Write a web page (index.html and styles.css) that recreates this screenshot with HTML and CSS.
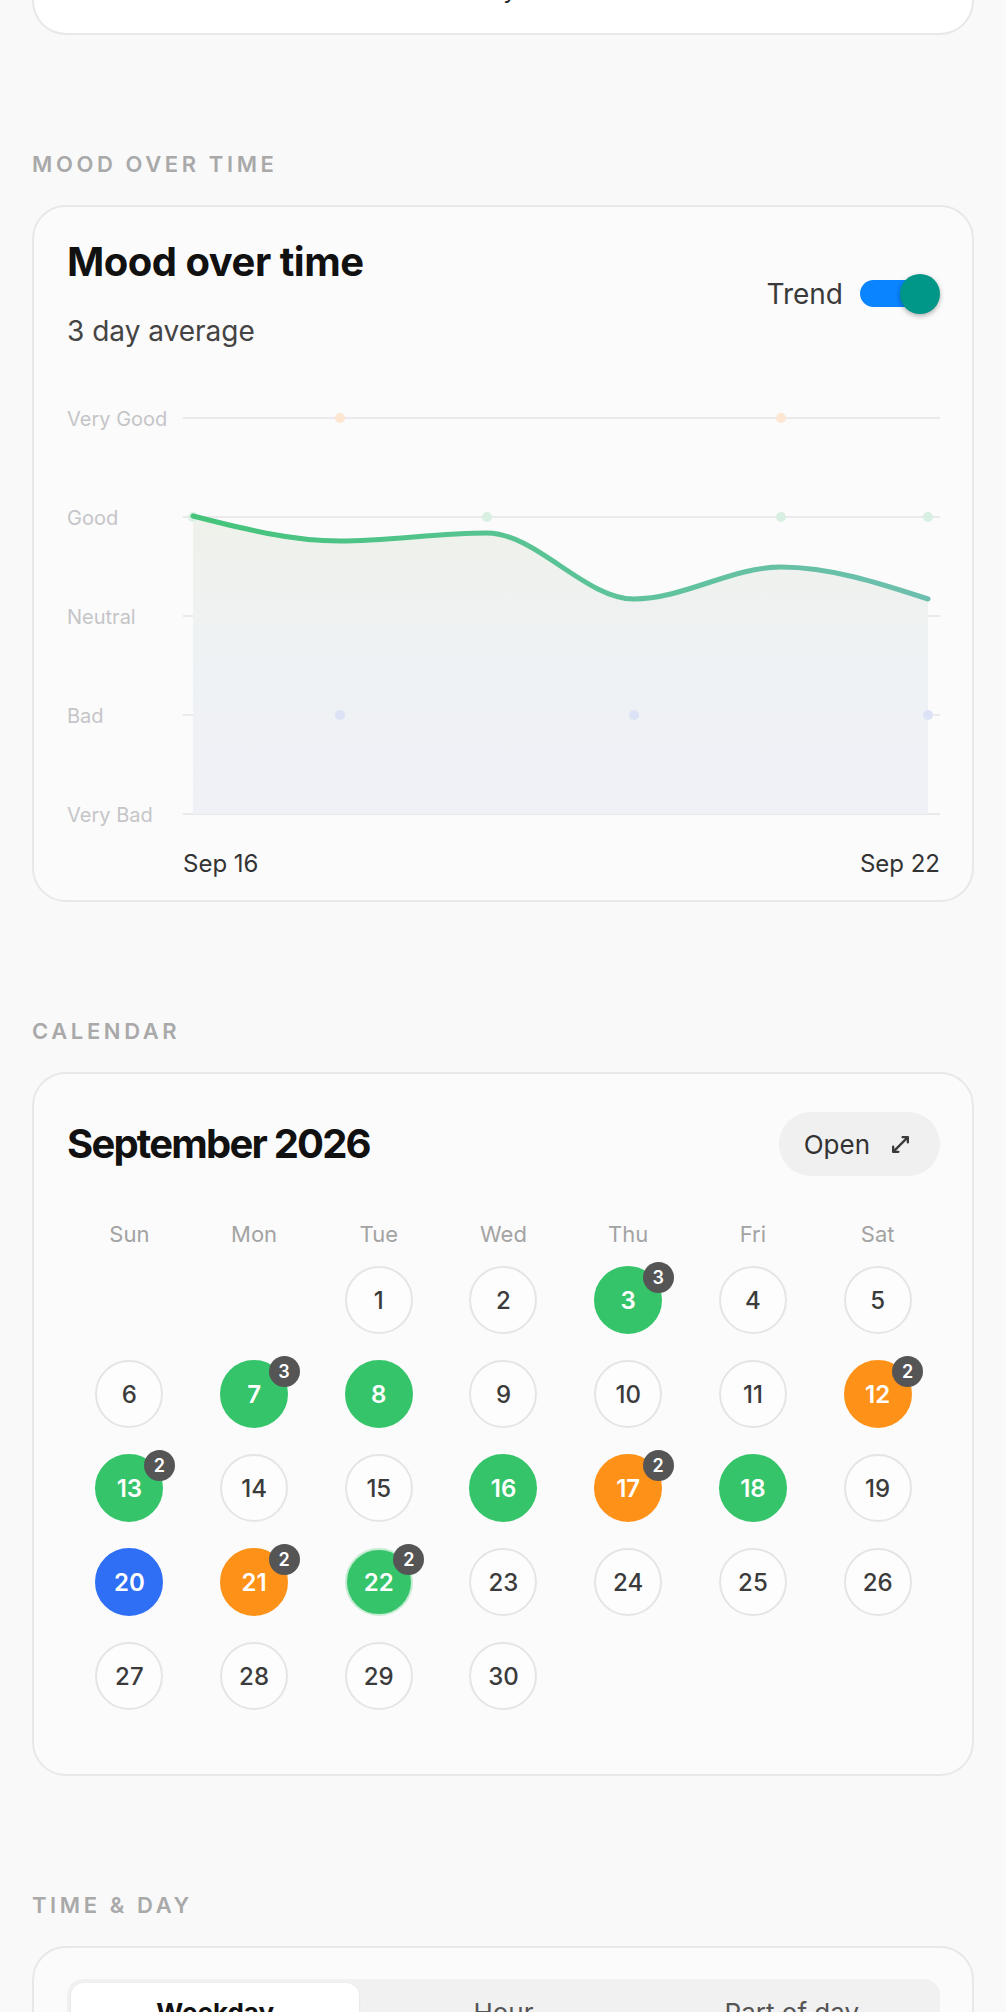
FILE: index.html
```html
<!DOCTYPE html>
<html lang="en">
<head>
<meta charset="utf-8">
<title>Mood insights</title>
<link rel="stylesheet" href="styles.css">
</head>
<body>
<main class="page">
  <div class="card card-top"><div class="peek">by</div></div>

  <section class="section">
    <h2 class="section-label">MOOD OVER TIME</h2>
    <div class="card card-mood">
      <div class="mood-head">
        <div>
          <h3 class="card-title">Mood over time</h3>
          <p class="subtitle">3 day average</p>
        </div>
        <div class="trend">
          <span>Trend</span>
          <span class="switch"><span class="track"></span><span class="knob"></span></span>
        </div>
      </div>
      <svg class="chart" viewBox="0 0 873 480" width="873" height="480">
        <defs>
          <linearGradient id="lineGrad" x1="0" y1="0" x2="1" y2="0">
            <stop offset="0" stop-color="#44c47a"/>
            <stop offset="0.6" stop-color="#5fc39b"/>
            <stop offset="1" stop-color="#6dbfae"/>
          </linearGradient>
          <linearGradient id="fillGrad" x1="0" y1="0" x2="0" y2="1">
            <stop offset="0" stop-color="#eff1ea"/>
            <stop offset="0.5" stop-color="#eef2f4"/>
            <stop offset="1" stop-color="#f0f0f7"/>
          </linearGradient>
        </defs>
        <g stroke="#e4e4e8" stroke-width="1.5">
          <line x1="116" x2="873" y1="18" y2="18"/>
          <line x1="116" x2="873" y1="117" y2="117"/>
          <line x1="116" x2="873" y1="216" y2="216"/>
          <line x1="116" x2="873" y1="315" y2="315"/>
          <line x1="116" x2="873" y1="414" y2="414"/>
        </g>
        <g class="ylabels">
          <text x="0" y="25.5">Very Good</text>
          <text x="0" y="124.5">Good</text>
          <text x="0" y="223.5">Neutral</text>
          <text x="0" y="322.5">Bad</text>
          <text x="0" y="421.5">Very Bad</text>
        </g>
        <path fill="url(#fillGrad)" d="M126,116 C175,128.5 224,141 273,141 C322,141 371,133 420,133 C469,133 518,199 567,199 C616,199 665,167 714,167 C763,167 812,183 861,199 L861,414 L126,414 Z"/>
        <g>
          <circle cx="273" cy="18" r="5" fill="#fde6d2"/>
          <circle cx="714" cy="18" r="5" fill="#fde6d2"/>
          <circle cx="126" cy="117" r="5" fill="#d8efe2"/>
          <circle cx="420" cy="117" r="5" fill="#d8efe2"/>
          <circle cx="714" cy="117" r="5" fill="#d8efe2"/>
          <circle cx="861" cy="117" r="5" fill="#d8efe2"/>
          <circle cx="273" cy="315" r="5" fill="#dde3f6"/>
          <circle cx="567" cy="315" r="5" fill="#dde3f6"/>
          <circle cx="861" cy="315" r="5" fill="#dde3f6"/>
        </g>
        <path fill="none" stroke="url(#lineGrad)" stroke-width="5" stroke-linecap="round" d="M126,116 C175,128.5 224,141 273,141 C322,141 371,133 420,133 C469,133 518,199 567,199 C616,199 665,167 714,167 C763,167 812,183 861,199"/>
        <g class="xlabels">
          <text x="116" y="472">Sep 16</text>
          <text x="873" y="472" text-anchor="end">Sep 22</text>
        </g>
      </svg>
    </div>
  </section>

  <section class="section">
    <h2 class="section-label">CALENDAR</h2>
    <div class="card card-cal">
      <div class="cal-head">
        <h3 class="card-title cal-title">September 2026</h3>
        <button class="open-btn">Open
          <svg class="open-icon" viewBox="0 0 20 20" width="21" height="21"><path d="M12 3h5v5M17 3L3 17M3 12v5h5" fill="none" stroke="#3a3a3a" stroke-width="2.2" stroke-linecap="round" stroke-linejoin="round"/></svg>
        </button>
      </div>
      <div class="weekdays">
        <span>Sun</span><span>Mon</span><span>Tue</span><span>Wed</span><span>Thu</span><span>Fri</span><span>Sat</span>
      </div>
      <div class="days">
        <div class="day first">1</div>
        <div class="day">2</div>
        <div class="day green">3<span class="badge">3</span></div>
        <div class="day">4</div>
        <div class="day">5</div>
        <div class="day">6</div>
        <div class="day green">7<span class="badge">3</span></div>
        <div class="day green">8</div>
        <div class="day">9</div>
        <div class="day">10</div>
        <div class="day">11</div>
        <div class="day orange">12<span class="badge">2</span></div>
        <div class="day green">13<span class="badge">2</span></div>
        <div class="day">14</div>
        <div class="day">15</div>
        <div class="day green">16</div>
        <div class="day orange">17<span class="badge">2</span></div>
        <div class="day green">18</div>
        <div class="day">19</div>
        <div class="day blue">20</div>
        <div class="day orange">21<span class="badge">2</span></div>
        <div class="day green today">22<span class="badge">2</span></div>
        <div class="day">23</div>
        <div class="day">24</div>
        <div class="day">25</div>
        <div class="day">26</div>
        <div class="day">27</div>
        <div class="day">28</div>
        <div class="day">29</div>
        <div class="day">30</div>
      </div>
    </div>
  </section>

  <section class="section">
    <h2 class="section-label">TIME &amp; DAY</h2>
    <div class="card card-time">
      <div class="seg">
        <div class="tab active">Weekday</div>
        <div class="tab">Hour</div>
        <div class="tab">Part of day</div>
      </div>
      <div class="time-body"></div>
    </div>
  </section>
</main>
</body>
</html>
```

FILE: styles.css
```css
* {
  box-sizing: border-box;
  margin: 0;
  padding: 0;
}

body {
  background: #f9f9f9;
  font-family: Inter, "Noto Sans", sans-serif;
  color: #111;
}

.page {
  padding: 0 32px 80px 32px;
}

.card {
  background: #fbfbfb;
  border: 2px solid #e8e8e8;
  border-radius: 34px;
  padding: 31px 32px 31px 33px;
}

.card-top {
  height: 35px;
  background: #fff;
  border-top: none;
  border-radius: 0 0 34px 34px;
  padding: 0;
  overflow: hidden;
  text-align: center;
}

.peek {
  font-size: 24px;
  line-height: 28px;
  margin-top: -24px;
  color: #222;
}

.section {
  margin-top: 115px;
}

.section-label {
  font-size: 22px;
  line-height: 28px;
  font-weight: 600;
  letter-spacing: 3.6px;
  color: #a9a9a9;
  margin-bottom: 27px;
}

.card-mood {
  padding-bottom: 20px;
}

.mood-head {
  display: flex;
  justify-content: space-between;
  align-items: center;
}

.card-title {
  font-size: 40px;
  line-height: 48px;
  font-weight: 700;
  letter-spacing: -0.5px;
  color: #111;
}

.cal-title {
  letter-spacing: -1.8px;
}

.subtitle {
  font-size: 28px;
  line-height: 36px;
  color: #444;
  margin-top: 27px;
}

.trend {
  display: flex;
  align-items: center;
  gap: 17px;
  font-size: 28px;
  color: #3a3a3a;
}

.switch {
  position: relative;
  display: block;
  width: 80px;
  height: 40px;
}

.track {
  position: absolute;
  left: 0;
  top: 6.5px;
  width: 68px;
  height: 27px;
  border-radius: 14px;
  background: #0a84ff;
}

.knob {
  position: absolute;
  right: 0;
  top: 0;
  width: 40px;
  height: 40px;
  border-radius: 50%;
  background: #009688;
  box-shadow: 0 2px 5px rgba(0, 0, 0, 0.3);
}

.chart {
  display: block;
  margin-top: 51px;
  overflow: visible;
}

.ylabels text {
  font-size: 20px;
  fill: #c5c5c8;
}

.xlabels text {
  font-size: 24px;
  font-weight: 400;
  fill: #333;
}

.card-cal {
  padding-bottom: 64px;
}

.cal-head {
  display: flex;
  justify-content: space-between;
  align-items: center;
  padding: 7px 0;
}

.open-btn {
  height: 64px;
  padding: 0 29px 0 25px;
  border: none;
  border-radius: 32px;
  background: #f0f0f0;
  display: flex;
  align-items: center;
  gap: 20px;
  font-family: inherit;
  font-size: 26px;
  color: #333;
}

.open-icon {
  display: block;
}

.weekdays {
  display: grid;
  grid-template-columns: repeat(7, 1fr);
  margin-top: 37px;
  font-size: 22px;
  line-height: 28px;
  color: #a3a3a3;
  text-align: center;
}

.days {
  display: grid;
  grid-template-columns: repeat(7, 1fr);
  row-gap: 26px;
  margin-top: 18px;
  justify-items: center;
}

.day {
  position: relative;
  width: 68px;
  height: 68px;
  border-radius: 50%;
  border: 2px solid #e5e5e5;
  background: #fdfdfd;
  display: flex;
  align-items: center;
  justify-content: center;
  font-size: 24px;
  font-weight: 500;
  color: #3b3b3b;
}

.day.first {
  grid-column-start: 3;
}

.day.green {
  background: #35c46a;
  border-color: #35c46a;
  color: #fff;
  font-weight: 600;
}

.day.orange {
  background: #fe9219;
  border-color: #fe9219;
  color: #fff;
  font-weight: 600;
}

.day.blue {
  background: #2f6ff5;
  border-color: #2f6ff5;
  color: #fff;
  font-weight: 600;
}

.day.today {
  border-color: #c6ebd3;
}

.badge {
  position: absolute;
  left: 46.5px;
  top: -6.5px;
  width: 31px;
  height: 31px;
  border-radius: 50%;
  background: #555;
  color: #fff;
  font-size: 18px;
  font-weight: 600;
  display: flex;
  align-items: center;
  justify-content: center;
}

.seg {
  display: grid;
  grid-template-columns: repeat(3, 1fr);
  padding: 4px;
  border-radius: 16px;
  background: #f1f1f1;
}

.tab {
  height: 58px;
  display: flex;
  align-items: center;
  justify-content: center;
  font-size: 26px;
  color: #555;
}

.tab.active {
  background: #fff;
  border-radius: 13px;
  font-weight: 700;
  color: #111;
  box-shadow: 0 1px 3px rgba(0, 0, 0, 0.08);
}

.time-body {
  height: 320px;
}
```
